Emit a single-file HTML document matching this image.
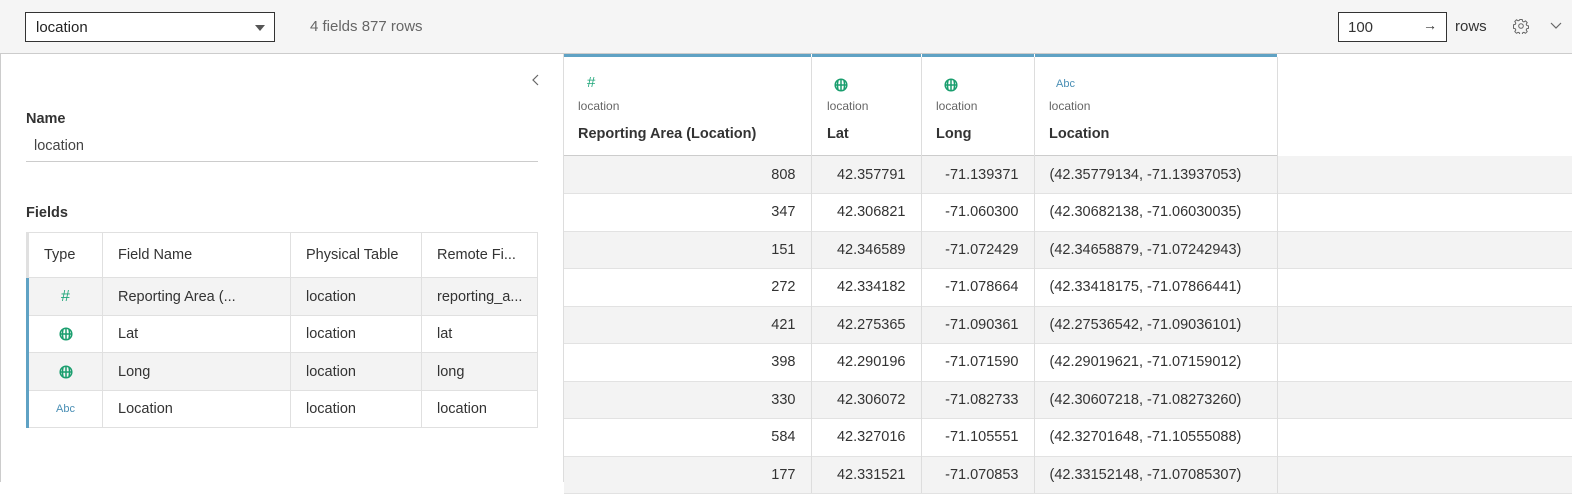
<!DOCTYPE html>
<html><head><style>
*{box-sizing:border-box;margin:0;padding:0}
body{width:1572px;height:482px;overflow:hidden;background:#fff;font-family:"Liberation Sans",sans-serif;color:#333;font-size:14.5px;position:relative}
.a{position:absolute}
.top{left:0;top:0;width:1572px;height:54px;background:#f5f5f5;border-bottom:1px solid #ccc}
.sel{left:25px;top:12px;width:250px;height:30px;border:1px solid #333;background:#fff;padding:6px 10px;font-size:15px;color:#222}
.tri{right:9px;top:12px;width:0;height:0;border-left:5px solid transparent;border-right:5px solid transparent;border-top:6px solid #555}
.grid{table-layout:fixed}
.grid td{border-right:1px solid #ddd;border-bottom:1px solid #e2e2e2;height:37.5px;padding:0 15px;white-space:nowrap;overflow:hidden}
table{border-collapse:collapse}
.ft{table-layout:fixed}
.ft td{border:1px solid #e0e0e0;padding:0 15px;white-space:nowrap;font-size:14.5px;overflow:hidden}
.g{background:#f3f3f3}
</style></head><body>
<div class="a top"></div>
<div class="a sel">location<div class="a tri"></div></div>
<div class="a" style="left:310px;top:18px;color:#666;font-size:15px">4 fields 877 rows</div>
<div class="a" style="left:1338px;top:12px;width:109px;height:30px;border:1px solid #333;background:#fff;padding:6px 9px;font-size:15px">100<span class="a" style="right:9px;top:4px;font-size:14px">→</span></div>
<div class="a" style="left:1455px;top:18px;font-size:15px">rows</div>
<svg class="a" style="left:1513px;top:18px" width="16" height="16" viewBox="0 0 16 16"><g fill="none" stroke="#666" stroke-width="1"><circle cx="8" cy="8" r="2.3"/><path d="M6.8 1.5h2.4l.4 1.8 1.3.6 1.6-1 1.7 1.7-1 1.6.6 1.3 1.7.4v2.4l-1.7.4-.6 1.3 1 1.6-1.7 1.7-1.6-1-1.3.6-.4 1.7H6.8l-.4-1.7-1.3-.6-1.6 1-1.7-1.7 1-1.6-.6-1.3-1.7-.4V6.8l1.7-.4.6-1.3-1-1.6 1.7-1.7 1.6 1 1.300-.6z"/></g></svg>
<svg class="a" style="left:1550px;top:22px" width="12" height="8"><path d="M1 1l5 5 5-5" fill="none" stroke="#666" stroke-width="1.2"/></svg>

<div class="a" style="left:0;top:54px;width:1px;height:428px;background:#ccc"></div>
<div class="a" style="left:563px;top:54px;width:1px;height:428px;background:#ddd"></div>
<svg class="a" style="left:531px;top:74px" width="10" height="12"><path d="M7 1L2 6l5 5" fill="none" stroke="#666" stroke-width="1.2"/></svg>
<div class="a" style="left:26px;top:111px;font-weight:bold;font-size:14.5px">Name</div>
<div class="a" style="left:34px;top:138px;color:#444">location</div>
<div class="a" style="left:26px;top:161px;width:512px;height:1px;background:#ccc"></div>
<div class="a" style="left:26px;top:205px;font-weight:bold">Fields</div>
<table class="a ft" style="left:26px;top:232px;width:512px">
<tr style="height:45px"><td style="width:75px;border-left:3px solid #e0e0e0">Type</td><td style="width:188px">Field Name</td><td style="width:131px">Physical Table</td><td>Remote Fi...</td></tr>
<tr class="g" style="height:38px"><td style="border-left:3px solid #5fa2c4;color:#1fa67a;text-align:center;font-size:16px">#</td><td>Reporting Area (...</td><td>location</td><td>reporting_a...</td></tr>
<tr style="height:37px"><td style="border-left:3px solid #5fa2c4;text-align:center"><svg width="14" height="14" viewBox="0 0 14 14" style="vertical-align:middle"><g fill="none" stroke="#1a9e6e" stroke-width="1.5"><circle cx="7" cy="7" r="5.8"/><path d="M1 7h12M7 1v12M4 2.5q-1 4.5 0 9M10 2.5q1 4.5 0 9"/></g></svg></td><td>Lat</td><td>location</td><td>lat</td></tr>
<tr class="g" style="height:38px"><td style="border-left:3px solid #5fa2c4;text-align:center"><svg width="14" height="14" viewBox="0 0 14 14" style="vertical-align:middle"><g fill="none" stroke="#1a9e6e" stroke-width="1.5"><circle cx="7" cy="7" r="5.8"/><path d="M1 7h12M7 1v12M4 2.5q-1 4.5 0 9M10 2.5q1 4.5 0 9"/></g></svg></td><td>Long</td><td>location</td><td>long</td></tr>
<tr style="height:37px"><td style="border-left:3px solid #5fa2c4;text-align:center;color:#4a8fb5;font-size:11px">Abc</td><td>Location</td><td>location</td><td>location</td></tr>
</table>

<div class="a" style="left:564px;top:54px;width:713px;height:3px;background:#5fa2c4"></div>
<div class="a" style="left:811px;top:54px;width:1px;height:3px;background:#fff"></div>
<div class="a" style="left:921px;top:54px;width:1px;height:3px;background:#fff"></div>
<div class="a" style="left:1034px;top:54px;width:1px;height:3px;background:#fff"></div>
<div class="a" style="left:564px;top:57px;width:713px;height:99px;border-bottom:1px solid #ccc"></div>

<div class="a" style="left:587px;top:74px;color:#1fa67a;font-size:15px">#</div>
<svg class="a" style="left:834px;top:78px" width="14" height="14" viewBox="0 0 14 14"><g fill="none" stroke="#1a9e6e" stroke-width="1.5"><circle cx="7" cy="7" r="5.8"/><path d="M1 7h12M7 1v12M4 2.5q-1 4.5 0 9M10 2.5q1 4.5 0 9"/></g></svg>
<svg class="a" style="left:944px;top:78px" width="14" height="14" viewBox="0 0 14 14"><g fill="none" stroke="#1a9e6e" stroke-width="1.5"><circle cx="7" cy="7" r="5.8"/><path d="M1 7h12M7 1v12M4 2.5q-1 4.5 0 9M10 2.5q1 4.5 0 9"/></g></svg>
<div class="a" style="left:1056px;top:78px;color:#4a8fb5;font-size:11px">Abc</div>
<div class="a" style="left:578px;top:99px;color:#666;font-size:12px">location</div>
<div class="a" style="left:827px;top:99px;color:#666;font-size:12px">location</div>
<div class="a" style="left:936px;top:99px;color:#666;font-size:12px">location</div>
<div class="a" style="left:1049px;top:99px;color:#666;font-size:12px">location</div>
<div class="a" style="left:578px;top:126px;font-weight:bold">Reporting Area (Location)</div>
<div class="a" style="left:827px;top:126px;font-weight:bold">Lat</div>
<div class="a" style="left:936px;top:126px;font-weight:bold">Long</div>
<div class="a" style="left:1049px;top:126px;font-weight:bold">Location</div>

<div class="a" style="left:564px;top:156px;width:1008px">
<table class="grid" style="width:1008px">
<tr class="g"><td style="width:247px;text-align:right">808</td><td style="width:110px;text-align:right">42.357791</td><td style="width:113px;text-align:right">-71.139371</td><td style="width:243px">(42.35779134, -71.13937053)</td><td style="border-right:0"></td></tr>
<tr><td style="text-align:right">347</td><td style="text-align:right">42.306821</td><td style="text-align:right">-71.060300</td><td>(42.30682138, -71.06030035)</td><td style="border-right:0"></td></tr>
<tr class="g"><td style="text-align:right">151</td><td style="text-align:right">42.346589</td><td style="text-align:right">-71.072429</td><td>(42.34658879, -71.07242943)</td><td style="border-right:0"></td></tr>
<tr><td style="text-align:right">272</td><td style="text-align:right">42.334182</td><td style="text-align:right">-71.078664</td><td>(42.33418175, -71.07866441)</td><td style="border-right:0"></td></tr>
<tr class="g"><td style="text-align:right">421</td><td style="text-align:right">42.275365</td><td style="text-align:right">-71.090361</td><td>(42.27536542, -71.09036101)</td><td style="border-right:0"></td></tr>
<tr><td style="text-align:right">398</td><td style="text-align:right">42.290196</td><td style="text-align:right">-71.071590</td><td>(42.29019621, -71.07159012)</td><td style="border-right:0"></td></tr>
<tr class="g"><td style="text-align:right">330</td><td style="text-align:right">42.306072</td><td style="text-align:right">-71.082733</td><td>(42.30607218, -71.08273260)</td><td style="border-right:0"></td></tr>
<tr><td style="text-align:right">584</td><td style="text-align:right">42.327016</td><td style="text-align:right">-71.105551</td><td>(42.32701648, -71.10555088)</td><td style="border-right:0"></td></tr>
<tr class="g"><td style="text-align:right">177</td><td style="text-align:right">42.331521</td><td style="text-align:right">-71.070853</td><td>(42.33152148, -71.07085307)</td><td style="border-right:0"></td></tr>
</table></div>
<div class="a" style="left:811px;top:57px;width:1px;height:425px;background:#ddd"></div>
<div class="a" style="left:921px;top:57px;width:1px;height:425px;background:#ddd"></div>
<div class="a" style="left:1034px;top:57px;width:1px;height:425px;background:#ddd"></div>
<div class="a" style="left:1277px;top:57px;width:1px;height:425px;background:#ddd"></div>
</body></html>
